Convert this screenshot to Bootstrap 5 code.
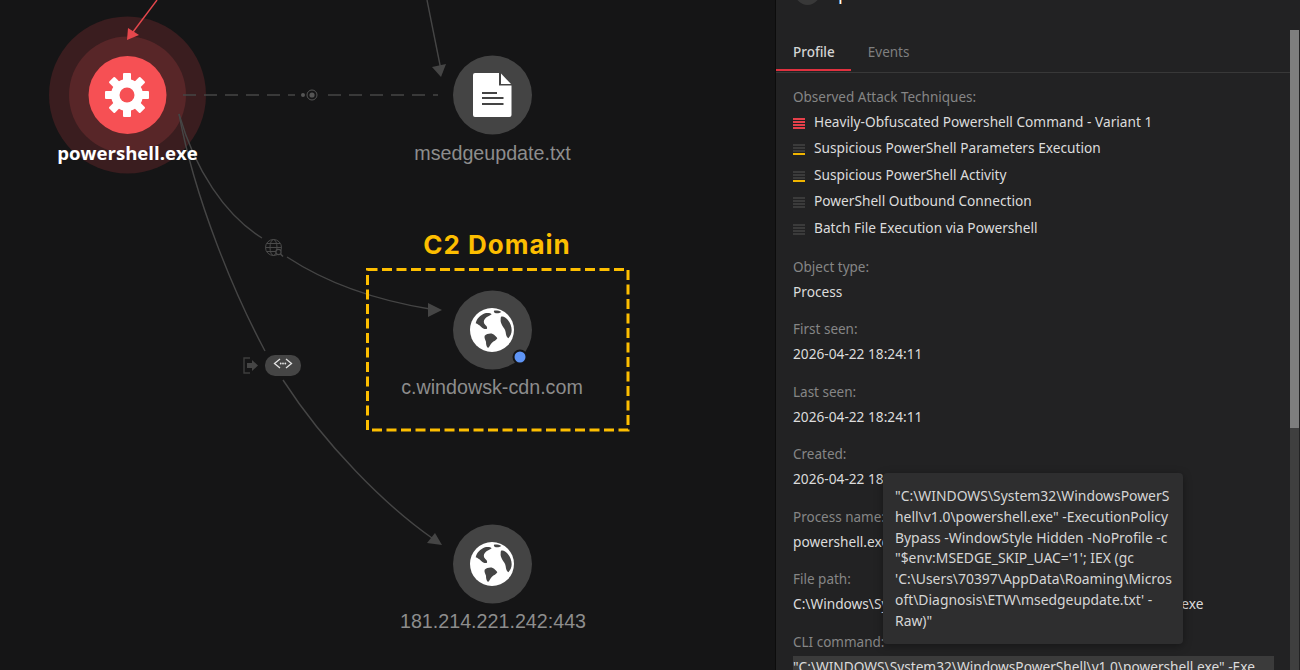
<!DOCTYPE html>
<html lang="en">
<head>
<meta charset="utf-8">
<title>Process graph</title>
<link href="https://cdn.jsdelivr.net/npm/bootstrap@5.3.0/dist/css/bootstrap.min.css" rel="stylesheet">
<style>
html,body{height:670px;overflow:hidden;background:#151516}
body{font-family:"Noto Sans",sans-serif}
.shell{width:1300px;height:670px;overflow:hidden}
.graph-area{width:775px;height:670px;background:#151516;flex:none}
.graph-area svg{display:block}
.side-panel{width:525px;height:670px;background:#222223;border-left:1px solid #0c0c0c;color:#dcdcdc;font-size:13.7px;flex:none}
.panel-body{width:514px;flex:none;min-width:0}
.head-cut{height:5px;overflow:hidden;padding-left:19px;margin-bottom:25px;gap:18px}
.head-dot{width:25px;height:25px;border-radius:50%;background:#383838;flex:none}
.head-name{font-size:18.6px;line-height:22px;color:#fff;margin-bottom:1px}
.tab-strip{border-bottom:1px solid #383838;height:43px;margin-bottom:0}
.tab-strip .nav-link{padding:11.5px 16px 7.5px 17px;line-height:20px;font-size:13.5px;color:#7f7f7f;border:0;border-bottom:2px solid transparent;border-radius:0;background:none;height:41px}
.tab-strip .nav-link.active{color:#d4d4d4;font-weight:500;border-bottom-color:#e0313f;background:none}
.detail-wrap{padding:13.500px 17px 0}
.cap{color:#868686;line-height:20px;height:20px;font-size:13.5px}
.tech-list{margin-top:5px}
.tech-row{height:26.5px;line-height:20px;gap:9px}
.sev{width:12px;height:11px;margin-top:6px;flex:none;gap:1px}
.sev i{display:block;height:2px;background:#3b3b3b}
.sev-red i{background:#e5404a}
.sev-amber i:last-child{background:#f0b400}
.fact{margin-top:0;height:62.5px;padding-top:0}
.fact-first{margin-top:12.500px}
.val{line-height:20px;margin-top:5px;color:#dcdcdc;white-space:nowrap}
.val-code{background:#3b3b3b;width:481px;height:30px;margin-top:4px;white-space:nowrap;overflow:hidden;padding-top:1px;line-height:20px}
.rail{width:9px;margin-top:30px;margin-left:0;background:#3f3f3f;height:640px;flex:none}
.rail-thumb{height:398px;background:#7e7e7e}
.hover-tip{position:absolute;left:107px;top:473px;width:300px;height:171px;background:#2e2e2f;border-radius:4px;padding:13px 12px;line-height:20.8px;font-size:13.9px;color:#d6d6d6;white-space:nowrap;box-shadow:0 2px 8px rgba(0,0,0,.35)}
.t-main{font-family:"Open Sans",sans-serif;font-weight:700;font-size:18.6px;fill:#fff}
.t-node{font-family:"Liberation Sans",sans-serif;font-size:19.7px;fill:#8d8d8d}
.t-c2{font-family:Inter,sans-serif;font-weight:700;font-size:26px;fill:#fdbe00;letter-spacing:1px}
</style>
</head>
<body>
<div class="shell d-flex">
  <div class="graph-area">
    <svg width="775" height="670" viewBox="0 0 775 670" role="img" aria-label="Process graph">
      <defs>
        <symbol id="globe" viewBox="0 0 252 252">
          <circle cx="126" cy="126" r="66" fill="#fff"/>
          <path fill="#444" d="M77 106c3-13 14-25 28-30 8-2 17-1 20 3-5 4-15 7-20 13-5 6-5 13 1 19 5 4 7 9 4 12-7 1-12-3-17-7-5-4-10-8-16-10z"/>
          <path fill="#444" d="M132 68c6-1 16 0 22 4-5 4-14 5-19 3-3-2-4-5-3-7z"/>
          <path fill="#444" d="M153 86c7-3 14 3 20 9 7 8 12 20 12 32 0 10-4 18-10 24-5-3-7-10-8-18-1-8-5-12-9-18-4-7-7-13-6-20 0-4 0-7 1-9z"/>
          <path fill="#444" d="M104 143c6-5 17-8 24-5 6 3 11 8 14 13-3 6-11 9-16 13-5 5-7 12-12 16-5-4-6-12-6-19-2-6-6-12-4-18z"/>
        </symbol>
      </defs>

      <!-- powershell node -->
      <circle cx="127.500" cy="95" r="78.500" fill="#3a1d1f"/>
      <circle cx="127.500" cy="95" r="58.500" fill="#582628"/>
      <circle cx="127.500" cy="95" r="39" fill="#f65054"/>
      <g fill="#fff" transform="translate(127 95)">
        <rect x="-4" y="-22" width="8" height="44" rx="1"/>
        <rect x="-4" y="-22" width="8" height="44" rx="1" transform="rotate(45)"/>
        <rect x="-4" y="-22" width="8" height="44" rx="1" transform="rotate(90)"/>
        <rect x="-4" y="-22" width="8" height="44" rx="1" transform="rotate(135)"/>
        <circle r="16"/>
        <circle r="7.500" fill="#f65054"/>
      </g>

      <!-- edges -->
      <g fill="none" stroke="#454545" stroke-width="1.4">
        <path d="M427 0L441 70"/>
        <path d="M183 95H295M328 95H438" stroke-dasharray="13 8"/>
        <path d="M179 114C195 170 225 215 262 238"/>
        <path d="M287 257C325 282 375 300 430 309"/>
        <path d="M179 114C195 200 235 295 265 351"/>
        <path d="M283 380C325 445 385 505 432 538"/>
      </g>
      <path d="M157 0L133 32" stroke="#e5474c" stroke-width="1.4" fill="none"/>
      <path fill="#e5474c" d="M127 40L128 28L139 35z"/>
      <path fill="#454545" d="M441 77L432 67L446 64z"/>
      <path fill="#454545" d="M442 310L428 303L428 317z"/>
      <path fill="#454545" d="M442 545L427 543L435 533z"/>

      <text class="t-main" x="127.500" y="159.500" text-anchor="middle">powershell.exe</text>

      <!-- dashed edge marker -->
      <circle cx="303" cy="95" r="2" fill="#555"/>
      <circle cx="312" cy="95" r="5" fill="none" stroke="#555" stroke-width="1"/>
      <circle cx="312" cy="95" r="2.6" fill="#555"/>

      <!-- dns edge icon -->
      <g fill="none" stroke="#4a4a4a" stroke-width="1">
        <circle cx="273.500" cy="247.500" r="8"/>
        <ellipse cx="273.500" cy="247.500" rx="3.500" ry="8"/>
        <path d="M265.500 247.500h16M266.800 243.500h13.400M266.800 251.500h13.400"/>
        <circle cx="278.500" cy="252" r="2.600" fill="#151516" stroke-width="1.200"/>
        <path d="M280.500 254l2.500 2.500" stroke-width="1.400"/>
      </g>

      <!-- network edge pill -->
      <rect x="265" y="355" width="36" height="21" rx="10" fill="#454545"/>
      <path d="M280 359L274.500 363.500L280 368M286 359L291.500 363.500L286 368" fill="none" stroke="#e4e4e4" stroke-width="1.300"/>
      <circle cx="280.700" cy="363.500" r=".9" fill="#e4e4e4"/><circle cx="283" cy="363.500" r=".9" fill="#e4e4e4"/><circle cx="285.300" cy="363.500" r=".9" fill="#e4e4e4"/>
      <path d="M250 358h-6v15h6" fill="none" stroke="#3e3e3e" stroke-width="1.400"/>
      <path fill="#454545" d="M247 363h5v-3l6 5.500l-6 5.500v-3h-5z"/>

      <!-- file node -->
      <circle cx="492.500" cy="95" r="39.500" fill="#444"/>
      <path fill="#fff" d="M475 73H499V85.500H511.500V115a2 2 0 0 1-2 2H475a2 2 0 0 1-2-2V75a2 2 0 0 1 2-2z"/>
      <path fill="#fff" d="M501 73.500L511 84H501z"/>
      <path fill="#444" d="M482 92h15v2h-15zM482 97h21.500v2H482zM482 103h21.500v2H482z"/>
      <text class="t-node" x="492.500" y="160" text-anchor="middle">msedgeupdate.txt</text>

      <!-- C2 domain highlight -->
      <text class="t-c2" x="497" y="254" text-anchor="middle">C2 Domain</text>
      <rect x="367.500" y="269.500" width="260.500" height="160.500" fill="none" stroke="#fdbe00" stroke-width="3" stroke-dasharray="10 4.500"/>

      <!-- domain node -->
      <circle cx="492.500" cy="330" r="39.500" fill="#444"/>
      <use href="#globe" x="450" y="288" width="84" height="84"/>
      <circle cx="520" cy="357" r="7.500" fill="#151516"/>
      <circle cx="520" cy="357" r="5.500" fill="#5f95f6"/>
      <text class="t-node" x="492" y="394" text-anchor="middle">c.windowsk-cdn.com</text>

      <!-- ip node -->
      <circle cx="492.500" cy="564" r="39.500" fill="#444"/>
      <use href="#globe" x="450" y="522" width="84" height="84"/>
      <text class="t-node" x="493" y="628" text-anchor="middle">181.214.221.242:443</text>
    </svg>
  </div>

  <aside class="side-panel d-flex position-relative">
    <div class="panel-body">
      <div class="head-cut d-flex align-items-end">
        <div class="head-dot"></div>
        <div class="head-name">powershell.exe</div>
      </div>
      <ul class="nav tab-strip">
        <li class="nav-item"><a class="nav-link active" href="#">Profile</a></li>
        <li class="nav-item"><a class="nav-link" href="#">Events</a></li>
      </ul>
      <div class="detail-wrap">
        <div class="cap">Observed Attack Techniques:</div>
        <div class="tech-list">
          <div class="tech-row d-flex"><div class="sev sev-red d-flex flex-column"><i></i><i></i><i></i><i></i></div><span>Heavily-Obfuscated Powershell Command - Variant 1</span></div>
          <div class="tech-row d-flex"><div class="sev sev-amber d-flex flex-column"><i></i><i></i><i></i><i></i></div><span>Suspicious PowerShell Parameters Execution</span></div>
          <div class="tech-row d-flex"><div class="sev sev-amber d-flex flex-column"><i></i><i></i><i></i><i></i></div><span>Suspicious PowerShell Activity</span></div>
          <div class="tech-row d-flex"><div class="sev d-flex flex-column"><i></i><i></i><i></i><i></i></div><span>PowerShell Outbound Connection</span></div>
          <div class="tech-row d-flex"><div class="sev d-flex flex-column"><i></i><i></i><i></i><i></i></div><span>Batch File Execution via Powershell</span></div>
        </div>
        <div class="fact fact-first"><div class="cap">Object type:</div><div class="val">Process</div></div>
        <div class="fact"><div class="cap">First seen:</div><div class="val">2026-04-22 18:24:11</div></div>
        <div class="fact"><div class="cap">Last seen:</div><div class="val">2026-04-22 18:24:11</div></div>
        <div class="fact"><div class="cap">Created:</div><div class="val">2026-04-22 18:24:11</div></div>
        <div class="fact"><div class="cap">Process name:</div><div class="val">powershell.exe</div></div>
        <div class="fact"><div class="cap">File path:</div><div class="val">C:\Windows\System32\WindowsPowerShell\v1.0\powershell.exe</div></div>
        <div class="fact"><div class="cap">CLI command:</div><div class="val-code">"C:\WINDOWS\System32\WindowsPowerShell\v1.0\powershell.exe" -Exe...</div></div>
      </div>
    </div>
    <div class="rail"><div class="rail-thumb"></div></div>
    <div class="hover-tip">"C:\WINDOWS\System32\WindowsPowerS<br>hell\v1.0\powershell.exe" -ExecutionPolicy<br>Bypass -WindowStyle Hidden -NoProfile -c<br>"$env:MSEDGE_SKIP_UAC='1'; IEX (gc<br>'C:\Users\70397\AppData\Roaming\Micros<br>oft\Diagnosis\ETW\msedgeupdate.txt' -<br>Raw)"</div>
  </aside>
</div>
<script src="https://cdn.jsdelivr.net/npm/bootstrap@5.3.0/dist/js/bootstrap.bundle.min.js"></script>
</body>
</html>
